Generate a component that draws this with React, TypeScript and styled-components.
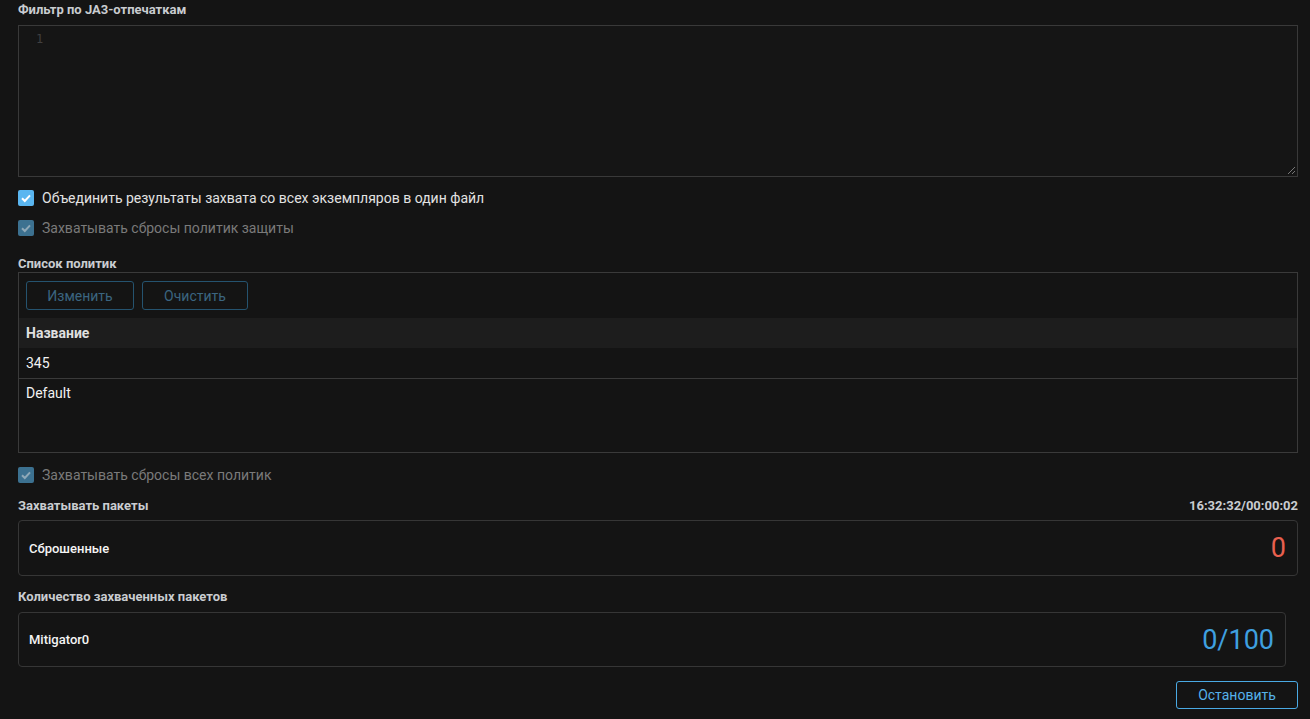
import React from "react";
import styled, { createGlobalStyle } from "styled-components";

const Global = createGlobalStyle`
  html, body { margin: 0; padding: 0; background: #141414; }
  body { font-family: Roboto, "Noto Sans", sans-serif; color: #e6e6e6; }
  * { box-sizing: border-box; }
`;

const Page = styled.div`
  display: flex;
  flex-direction: column;
  padding: 2px 12px 0 18px;
  width: 1310px;
  min-height: 719px;
  background: #141414;
`;

const SectionTitle = styled.div<{ $mt?: number }>`
  font-size: 13px;
  font-weight: 700;
  color: #c9ccd0;
  line-height: 16px;
  margin-top: ${(p) => p.$mt ?? 0}px;
  display: flex;
  justify-content: space-between;
`;

const Editor = styled.div`
  margin-top: 7px;
  height: 152px;
  border: 1px solid #393939;
  background: #151515;
  position: relative;
  display: flex;
  padding: 6px 0 0 17px;
`;

const LineNo = styled.span`
  font-family: "DejaVu Sans Mono", monospace;
  font-size: 12px;
  color: #404040;
  line-height: 14px;
`;

const Grip = styled.svg`
  position: absolute;
  right: 1px;
  bottom: 1px;
`;

const CheckRow = styled.label<{ $mt: number; $disabled?: boolean }>`
  display: flex;
  align-items: center;
  gap: 8px;
  margin-top: ${(p) => p.$mt}px;
  font-size: 14px;
  line-height: 18px;
  color: ${(p) => (p.$disabled ? "#7a7a7a" : "#e2e2e2")};
`;

const Box = styled.span<{ $disabled?: boolean }>`
  width: 16px;
  height: 16px;
  border-radius: 2px;
  background: ${(p) => (p.$disabled ? "#3c7190" : "#5ab6f0")};
  display: flex;
  align-items: center;
  justify-content: center;
`;

const Panel = styled.div`
  margin-top: 0;
  border: 1px solid #3a3a3a;
  height: 181px;
  display: flex;
  flex-direction: column;
`;

const Toolbar = styled.div`
  display: flex;
  gap: 8px;
  padding: 8px 7px;
`;

const GhostButton = styled.button<{ $w: number }>`
  width: ${(p) => p.$w}px;
  height: 29px;
  background: transparent;
  border: 1px solid #25536f;
  border-radius: 3px;
  color: #3b6580;
  font-family: Roboto, sans-serif;
  font-size: 14px;
  padding: 0;
`;

const HeadRow = styled.div`
  background: #1d1d1d;
  height: 30px;
  display: flex;
  align-items: center;
  padding-left: 7px;
  font-size: 14px;
  font-weight: 700;
  color: #e0e0e0;
`;

const Row = styled.div<{ $border?: boolean; $h?: number }>`
  height: ${(p) => p.$h ?? 31}px;
  display: flex;
  align-items: center;
  padding-left: 7px;
  font-size: 14px;
  color: #f2f2f2;
  border-bottom: ${(p) => (p.$border ? "1px solid #3a3a3a" : "none")};
`;

const Card = styled.div<{ $mt: number; $h: number; $mr?: number }>`
  margin-top: ${(p) => p.$mt}px;
  margin-right: ${(p) => p.$mr ?? 0}px;
  height: ${(p) => p.$h}px;
  border: 1px solid #363636;
  border-radius: 4px;
  background: #141414;
  display: flex;
  align-items: center;
  justify-content: space-between;
  padding: 0 11px 0 10px;
`;

const CardLabel = styled.span`
  font-size: 13px;
  font-weight: 500;
  color: #f4f4f4;
`;

const BigValue = styled.span<{ $color: string }>`
  font-size: 27px;
  font-weight: 400;
  color: ${(p) => p.$color};
  line-height: 30px;
`;

const Footer = styled.div`
  display: flex;
  justify-content: flex-end;
  margin-top: 14px;
`;

const PrimaryButton = styled.button`
  width: 122px;
  height: 28px;
  background: transparent;
  border: 1px solid #4aaae4;
  border-radius: 3px;
  color: #55b2ea;
  font-family: Roboto, sans-serif;
  font-size: 14px;
  padding: 0;
`;

const Check = ({ disabled }: { disabled?: boolean }) => (
  <Box $disabled={disabled}>
    <svg width="12" height="12" viewBox="0 0 12 12">
      <path d="M2 6.2 L4.8 9 L10 3.4" fill="none" stroke={disabled ? "#8fa9b8" : "#ffffff"} strokeWidth="2" />
    </svg>
  </Box>
);

export default function App() {
  return (
    <>
      <Global />
      <Page>
        <SectionTitle>Фильтр по JA3-отпечаткам</SectionTitle>
        <Editor>
          <LineNo>1</LineNo>
          <Grip width="10" height="10" viewBox="0 0 10 10">
            <path d="M9 2 L2 9 M9 6 L6 9" stroke="#777" strokeWidth="1" />
          </Grip>
        </Editor>
        <CheckRow $mt={12}>
          <Check />
          Объединить результаты захвата со всех экземпляров в один файл
        </CheckRow>
        <CheckRow $mt={12} $disabled>
          <Check disabled />
          Захватывать сбросы политик защиты
        </CheckRow>
        <SectionTitle $mt={19}>Список политик</SectionTitle>
        <Panel>
          <Toolbar>
            <GhostButton $w={108}>Изменить</GhostButton>
            <GhostButton $w={106}>Очистить</GhostButton>
          </Toolbar>
          <HeadRow>Название</HeadRow>
          <Row $border>345</Row>
          <Row $h={28}>Default</Row>
        </Panel>
        <CheckRow $mt={13} $disabled>
          <Check disabled />
          Захватывать сбросы всех политик
        </CheckRow>
        <SectionTitle $mt={14}>
          <span>Захватывать пакеты</span>
          <span>16:32:32/00:00:02</span>
        </SectionTitle>
        <Card $mt={6} $h={56}>
          <CardLabel>Сброшенные</CardLabel>
          <BigValue $color="#e8604f">0</BigValue>
        </Card>
        <SectionTitle $mt={13}>Количество захваченных пакетов</SectionTitle>
        <Card $mt={7} $h={55} $mr={12}>
          <CardLabel>Mitigator0</CardLabel>
          <BigValue $color="#3fa0e0">0/100</BigValue>
        </Card>
        <Footer>
          <PrimaryButton>Остановить</PrimaryButton>
        </Footer>
      </Page>
    </>
  );
}
